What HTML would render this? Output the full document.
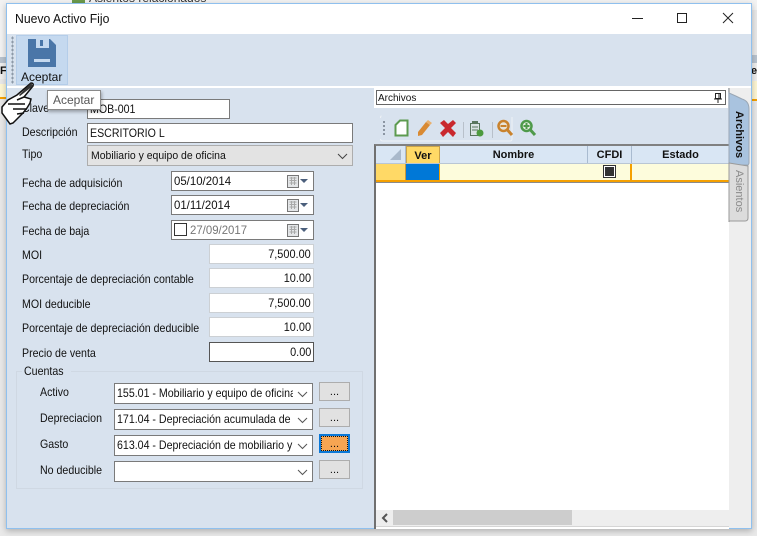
<!DOCTYPE html>
<html><head><meta charset="utf-8"><style>
html,body{margin:0;padding:0}
body{width:757px;height:536px;position:relative;overflow:hidden;background:#e9e9e9;font-family:"Liberation Sans",sans-serif;font-size:12px;color:#111}
.a{position:absolute;box-sizing:border-box;white-space:nowrap}
.l{position:absolute;white-space:nowrap;font-size:12px;line-height:14px;transform:scaleX(.885);transform-origin:0 50%}
.inp{position:absolute;box-sizing:border-box;background:#fff;border:1px solid #7a7a7a;font-size:12px;line-height:17px;padding-left:2px;white-space:nowrap;overflow:hidden}
.t{display:inline-block;transform:scaleX(.885);transform-origin:0 50%}
.d{display:inline-block;transform:scaleX(.95);transform-origin:0 50%}
.n{display:inline-block;transform:scaleX(.91);transform-origin:100% 50%}
.num{border:1px solid #ccd0d4;text-align:right;padding-right:2px;padding-left:0;line-height:19px}
.cal{position:absolute;left:115px;top:3px}
.btn{position:absolute;box-sizing:border-box;left:319px;width:31px;height:19px;background:#e1e1e1;border:1px solid #adadad;text-align:center;font-size:11px;line-height:18px}
.chev{position:absolute;right:4px;top:6px}
.cv{position:absolute;right:0;top:0;width:19px;height:19px;background:#fff}
.th{position:absolute;box-sizing:border-box;top:146px;height:17px;background:#d9e6f4;border-right:1px solid #a9bbd0;font-weight:bold;font-size:11px;text-align:center;line-height:19px;font-family:"Liberation Sans",sans-serif}
</style></head><body>
<!-- background app -->
<div class="a" style="left:0;top:0;width:757px;height:10px;background:#f3f3f3"></div>
<div class="a" style="left:72px;top:0;width:13px;height:3px;background:#6a9a4c"></div>
<div class="a" style="left:89px;top:-9px;font-size:12px;color:#333">Asientos relacionados</div>
<div class="a" style="left:0;top:57px;width:6px;height:6px;background:#b8c3cf"></div>
<div class="a" style="left:0;top:63px;width:6px;height:16px;background:#eee;font-weight:bold;font-size:11px;line-height:16px">F</div>
<div class="a" style="left:0;top:84px;width:6px;height:15px;background:#fdf6d3;border-bottom:2px solid #f5a000"></div>
<div class="a" style="left:751px;top:55px;width:6px;height:8px;background:#b8c3cf"></div>
<div class="a" style="left:751px;top:63px;width:6px;height:18px;background:#eee;font-weight:bold;font-size:11px;line-height:16px">er</div>
<div class="a" style="left:751px;top:81px;width:6px;height:20px;background:#fdf6d3;border-bottom:2px solid #f5a000"></div>
<div class="a" style="left:0;top:0;width:7px;height:57px;background:#f2f2f2"></div>
<!-- window -->
<div class="a" style="left:6px;top:3px;width:746px;height:526px;background:#d8e2ee;border:1px solid #8fc0ee;box-shadow:0 2px 6px rgba(0,0,0,.25)"></div>
<div class="a" style="left:7px;top:4px;width:744px;height:30px;background:#fff"></div>
<div class="a" style="left:15px;top:11px;font-size:13px;line-height:16px;color:#111;transform:scaleX(.94);transform-origin:0 50%">Nuevo Activo Fijo</div>
<svg class="a" style="left:630px;top:10px" width="115" height="16"><path d="M2 8.500H13" stroke="#222" fill="none"/><path d="M47.500 3.500H56.500V12.500H47.500Z" stroke="#222" fill="none"/><path d="M93 3L103 13M103 3L93 13" stroke="#222" fill="none"/></svg>
<!-- toolbar -->
<div class="a" style="left:7px;top:86px;width:744px;height:2px;background:#fff"></div>
<div class="a" style="left:11px;top:36px;width:3px;height:48px;background-image:radial-gradient(#8d99a8 1px,transparent 1px);background-size:3px 4px"></div>
<div class="a" style="left:16px;top:35px;width:52px;height:50px;background:#c5d9ef;border:1px solid #b4cde9"></div>
<svg class="a" style="left:27px;top:38px" width="30" height="30"><path d="M1 1H23L29 7V29H1Z" fill="#4a76a8"/><path d="M9 1H22V10H9Z" fill="#c5d9ef"/><path d="M13 2H16V8H13Z" fill="#4a76a8"/><path d="M7 21H23V24H7Z" fill="#c5d9ef"/></svg>
<div class="a" style="left:21px;top:70px;font-size:12px;line-height:14px">Aceptar</div>
<!-- left form -->
<div class="l" style="left:22px;top:101px">Clave</div>
<div class="inp" style="left:87px;top:99px;width:143px;height:20px;line-height:18px"><span class="t">MOB-001</span></div>
<div class="l" style="left:22px;top:125px">Descripción</div>
<div class="inp" style="left:87px;top:123px;width:266px;height:20px;line-height:18px"><span class="t">ESCRITORIO L</span></div>
<div class="l" style="left:22px;top:147px">Tipo</div>
<div class="inp" style="left:87px;top:145px;width:266px;height:21px;background:#e3e3e3;border-color:#adadad;font-size:11px;line-height:20px;padding-left:3px"><span class="d">Mobiliario y equipo de oficina</span><svg class="chev" style="top:7px" width="11" height="7"><path d="M1 1L5.500 5.500L10 1" stroke="#444" fill="none"/></svg></div>
<div class="l" style="left:22px;top:176px">Fecha de adquisición</div>
<div class="inp" style="left:171px;top:171px;width:143px;height:20px;line-height:18px"><span class="d">05/10/2014</span><svg class="cal" width="24" height="14"><rect x=".5" y=".5" width="11" height="12" fill="#e4e6e8" stroke="#777"/><path d="M2.500 3H9.500M2.500 5.500H9.500M2.500 8H9.500M4.500 2V10M7.500 2V10" stroke="#a9a9a9"/><path d="M13 4H21L17 8Z" fill="#4b5f7c"/></svg></div>
<div class="l" style="left:22px;top:199px">Fecha de depreciación</div>
<div class="inp" style="left:171px;top:195px;width:143px;height:20px;line-height:18px"><span class="d">01/11/2014</span><svg class="cal" width="24" height="14"><rect x=".5" y=".5" width="11" height="12" fill="#e4e6e8" stroke="#777"/><path d="M2.500 3H9.500M2.500 5.500H9.500M2.500 8H9.500M4.500 2V10M7.500 2V10" stroke="#a9a9a9"/><path d="M13 4H21L17 8Z" fill="#4b5f7c"/></svg></div>
<div class="l" style="left:22px;top:224px">Fecha de baja</div>
<div class="inp" style="left:171px;top:220px;width:143px;height:20px;line-height:18px;color:#777;padding-left:18px"><span class="d">27/09/2017</span><div class="a" style="left:2px;top:2px;width:13px;height:13px;border:1px solid #333;background:#fff"></div><svg class="cal" width="24" height="14"><rect x=".5" y=".5" width="11" height="12" fill="#e4e6e8" stroke="#777"/><path d="M2.500 3H9.500M2.500 5.500H9.500M2.500 8H9.500M4.500 2V10M7.500 2V10" stroke="#a9a9a9"/><path d="M13 4H21L17 8Z" fill="#4b5f7c"/></svg></div>
<div class="l" style="left:22px;top:248px">MOI</div>
<div class="inp num" style="left:209px;top:244px;width:105px;height:20px"><span class="n">7,500.00</span></div>
<div class="l" style="left:22px;top:272px">Porcentaje de depreciación contable</div>
<div class="inp num" style="left:209px;top:268px;width:105px;height:20px"><span class="n">10.00</span></div>
<div class="l" style="left:22px;top:297px">MOI deducible</div>
<div class="inp num" style="left:209px;top:293px;width:105px;height:20px"><span class="n">7,500.00</span></div>
<div class="l" style="left:22px;top:321px">Porcentaje de depreciación deducible</div>
<div class="inp num" style="left:209px;top:317px;width:105px;height:20px"><span class="n">10.00</span></div>
<div class="l" style="left:22px;top:346px">Precio de venta</div>
<div class="inp num" style="left:209px;top:342px;width:105px;height:20px;border-color:#555"><span class="n">0.00</span></div>
<!-- group -->
<div class="a" style="left:16px;top:371px;width:347px;height:118px;border:1px solid #cfd8e3"></div>
<div class="a" style="left:22px;top:364px;padding:0 2px;background:#d8e2ee;line-height:14px"><span class="t">Cuentas</span></div>
<div class="l" style="left:40px;top:385px">Activo</div>
<div class="inp" style="left:114px;top:383px;width:199px;height:21px;line-height:19px"><span class="t">155.01 - Mobiliario y equipo de oficina</span><div class="cv"></div><svg class="chev" style="top:7px" width="11" height="7"><path d="M1 1L5.500 5.500L10 1" stroke="#555" fill="none"/></svg></div>
<div class="btn" style="top:382px">...</div>
<div class="l" style="left:40px;top:411px">Depreciacion</div>
<div class="inp" style="left:114px;top:409px;width:199px;height:21px;line-height:19px"><span class="t">171.04 - Depreciación acumulada de</span><div class="cv"></div><svg class="chev" style="top:7px" width="11" height="7"><path d="M1 1L5.500 5.500L10 1" stroke="#555" fill="none"/></svg></div>
<div class="btn" style="top:408px">...</div>
<div class="l" style="left:40px;top:437px">Gasto</div>
<div class="inp" style="left:114px;top:435px;width:199px;height:21px;line-height:19px"><span class="t">613.04 - Depreciación de mobiliario y</span><div class="cv"></div><svg class="chev" style="top:7px" width="11" height="7"><path d="M1 1L5.500 5.500L10 1" stroke="#555" fill="none"/></svg></div>
<div class="btn" style="top:434px;background:#f6a552;border:2px solid #0a78d7;outline:1px dotted #111;outline-offset:-3px;line-height:16px">...</div>
<div class="l" style="left:40px;top:463px">No deducible</div>
<div class="inp" style="left:114px;top:461px;width:199px;height:21px"><svg class="chev" style="top:7px" width="11" height="7"><path d="M1 1L5.500 5.500L10 1" stroke="#555" fill="none"/></svg></div>
<div class="btn" style="top:460px">...</div>
<!-- right panel -->
<div class="a" style="left:374px;top:88px;width:354px;height:20px;background:#fff"></div>
<div class="inp" style="left:376px;top:90px;width:350px;height:15px;font-size:10px;line-height:15px;padding-left:1px;border-color:#666">Archivos<svg class="a" style="right:2px;top:1px" width="10" height="11"><path d="M2.500 1.500H7.500V6.500H2.500ZM1 7H9M5 7V11M6 2V6" stroke="#222" fill="none"/></svg></div>
<svg class="a" style="left:380px;top:115px" width="160" height="28">
<path d="M1.500 1Q.5 1 .5 3M.5 24Q.5 26 3 26H130Q132 26 132 24V2" stroke="#eef2f6" fill="none"/>
<g fill="#8b95a2"><rect x="3" y="6" width="2" height="2"/><rect x="3" y="10" width="2" height="2"/><rect x="3" y="14" width="2" height="2"/><rect x="3" y="18" width="2" height="2"/></g>
<path d="M15.500 10L20 5.500H27.500V20.500H15.500Z" fill="#fff" stroke="#5d9b50" stroke-width="2"/>
<path d="M38 17L46 7L50 10L42 20L38 21Z" fill="#d98a33"/><path d="M46 7L48 5L52 8L50 10Z" fill="#e9b06d"/>
<path d="M60 8L64 5L68 9L73 5L76 8L71 13L76 18L73 22L68 17L63 22L60 18L65 13Z" fill="#c9282e"/>
<rect x="83" y="7" width="1" height="16" fill="#b8c0ca"/>
<rect x="90.500" y="8.500" width="9" height="12" fill="#d9e2e4" stroke="#59755f"/><rect x="92" y="6" width="6" height="3" fill="#59755f"/><path d="M92 12H98M92 15H98" stroke="#59755f"/><circle cx="100" cy="18" r="3.500" fill="#4c9a3e"/>
<rect x="112" y="7" width="1" height="16" fill="#b8c0ca"/>
</svg>
<svg class="a" style="left:496px;top:118px" width="42" height="22">
<circle cx="7.500" cy="8" r="5" fill="#e8e4d8" stroke="#c9822c" stroke-width="2.500"/><path d="M4.500 8H10.500" stroke="#c9822c" stroke-width="2"/><path d="M11.500 12L16 17" stroke="#c9822c" stroke-width="3"/>
<circle cx="30.500" cy="8" r="5" fill="#e4ece0" stroke="#4f9a4a" stroke-width="2.500"/><path d="M27.500 8H33.500M30.500 5V11" stroke="#4f9a4a" stroke-width="2"/><path d="M34.500 12L39 17" stroke="#4f9a4a" stroke-width="3"/>
</svg>
<!-- grid -->
<div class="a" style="left:374px;top:144px;width:355px;height:385px;background:#fff;border-left:2px solid #707070;border-top:2px solid #808080"></div>
<div class="th" style="left:376px;width:30px"><svg class="a" style="left:14px;top:3px" width="12" height="11"><path d="M11 0V11H0Z" fill="#a9b9cb"/></svg></div>
<div class="th" style="left:406px;width:34px;background:#ffd966;border:1px solid #c9a24a;border-bottom:none;line-height:18px">Ver</div>
<div class="th" style="left:440px;width:148px">Nombre</div>
<div class="th" style="left:588px;width:44px">CFDI</div>
<div class="th" style="left:632px;width:97px;border-right:none">Estado</div>
<div class="a" style="left:376px;top:163px;width:353px;height:19px;background:#fdfcdc;border-top:1px solid #b9c6d4;border-bottom:2px solid #f5a000"></div>
<div class="a" style="left:376px;top:182px;width:353px;height:1px;background:#8a8a8a"></div>
<div class="a" style="left:376px;top:164px;width:30px;height:16px;background:#ffd966;border-right:1px solid #c9983a"></div>
<div class="a" style="left:406px;top:164px;width:33px;height:16px;background:#0078d7"></div>
<div class="a" style="left:439px;top:164px;width:1px;height:16px;background:#f5a000"></div>
<div class="a" style="left:630px;top:164px;width:2px;height:16px;background:#f5a000"></div>
<div class="a" style="left:603px;top:165px;width:13px;height:13px;background:#fff;border:1px solid #333"></div>
<div class="a" style="left:605px;top:167px;width:9px;height:9px;background:#333"></div>
<!-- scrollbar -->
<div class="a" style="left:376px;top:510px;width:353px;height:16px;background:#eee"></div>
<div class="a" style="left:393px;top:510px;width:179px;height:15px;background:#cdcdcd"></div>
<svg class="a" style="left:380px;top:513px" width="10" height="10"><path d="M7 1L3 5L7 9" stroke="#555" stroke-width="2" fill="none"/></svg>
<div class="a" style="left:376px;top:526px;width:353px;height:1px;background:#d5d5d5"></div>
<!-- side tabs -->
<div class="a" style="left:729px;top:88px;width:22px;height:440px;background:#eee"></div>
<svg class="a" style="left:728px;top:88px" width="23" height="135">
<path d="M1 0V134" stroke="#888" fill="none"/>
<path d="M1 5Q8 8 14 11Q21 13 21 21V75Q21 76 20 77L1 77Z" fill="#a9c3df" stroke="#9aa7b5"/>
<path d="M1 75L20 78V130Q20 133 17 133H1Z" fill="#dcdcdc" stroke="#9a9a9a"/>
</svg>
<div class="a" style="left:729px;top:110px;width:20px;height:50px;writing-mode:vertical-rl;font-size:11px;font-weight:bold;line-height:20px;text-align:center">Archivos</div>
<div class="a" style="left:729px;top:169px;width:20px;height:44px;writing-mode:vertical-rl;font-size:11px;color:#8a8a8a;line-height:20px;text-align:center">Asientos</div>
<!-- tooltip -->
<div class="a" style="left:47px;top:90px;width:54px;height:20px;background:#fff;border:1px solid #8a8a8a;box-shadow:1px 2px 3px rgba(0,0,0,.3);font-size:12px;line-height:18px;color:#575757;padding-left:5px">Aceptar</div>
<!-- hand cursor -->
<svg class="a" style="left:0;top:80px" width="36" height="46"><path d="M2 27L8 20L17 15L31 3Q34 3 33 6L24 17L31 19L30 23L27 28L23 33L13 43L10 44L2 33Z" fill="#fff" stroke="#111" stroke-width="1.500"/><path d="M31 3L19 15L20 16L33 6Z" fill="#333"/><path d="M8 24H25M13 29H27M17 34L24 33M24 17L17 20" stroke="#111" stroke-width="1.500" fill="none"/></svg>
</body></html>
